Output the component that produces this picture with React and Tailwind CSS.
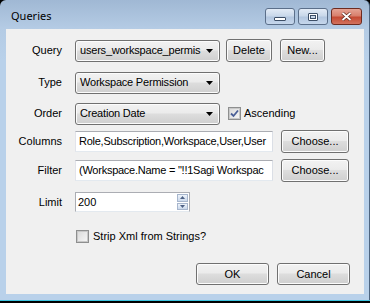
import React from 'react';

const ui = { fontFamily: '"Liberation Sans", Arial, sans-serif' };

function Win7Button({ children, className = '' }) {
  return (
    <div
      className={`flex items-center justify-center rounded-[3px] border border-[#707070] bg-[linear-gradient(#f2f2f2_0%,#ebebeb_45%,#dddddd_50%,#cfcfcf_100%)] text-[11px] text-black shadow-[inset_0_0_0_1px_#fcfcfc] ${className}`}
    >
      {children}
    </div>
  );
}

function Combo({ value }) {
  return (
    <div className="flex h-[22px] w-[145px] items-center rounded-[3px] border border-[#707070] bg-[linear-gradient(#f2f2f2_0%,#ebebeb_45%,#dddddd_50%,#cfcfcf_100%)] shadow-[inset_0_0_0_1px_#fcfcfc]">
      <span className="flex-1 whitespace-nowrap pl-[4px] text-[11px] tracking-[-0.2px] text-black">{value}</span>
      <svg width="7" height="4" viewBox="0 0 7 4" className="mr-[6px] ml-[2px] shrink-0">
        <path d="M0 0h7L3.5 4z" fill="#000" />
      </svg>
    </div>
  );
}

function TextBox({ value, className = '' }) {
  return (
    <div className={`flex h-[21px] items-center whitespace-nowrap border border-[#abadb3] border-b-[#e3e9ef] border-l-[#e2e3ea] border-r-[#dbdfe6] bg-white pl-[3px] text-[11px] tracking-[-0.25px] text-black ${className}`}>
      {value}
    </div>
  );
}

function CheckBox({ checked }) {
  return (
    <div className="flex h-[13px] w-[13px] shrink-0 items-center justify-center border border-[#8e8f8f] bg-white">
      <div className="flex h-[11px] w-[11px] items-center justify-center border border-[#c8c8c8] bg-[linear-gradient(135deg,#dcdcdc,#f4f4f4)]">
        {checked && (
          <svg width="9" height="9" viewBox="0 0 9 9">
            <path d="M1 4.5l2.5 2.5L8 1.5" fill="none" stroke="#4a5f97" strokeWidth="1.8" />
          </svg>
        )}
      </div>
    </div>
  );
}

function Label({ children }) {
  return <div className="w-[57px] shrink-0 pr-[1px] text-right text-[11px] text-black">{children}</div>;
}

function TitleButton({ kind }) {
  if (kind === 'close') {
    return (
      <div className="flex h-[17px] w-[31px] items-center justify-center rounded-[3px] border border-[#6d2b20] bg-[linear-gradient(#e5a394_0%,#d8806d_45%,#c54a33_55%,#d2725e_100%)]">
        <svg width="11" height="9" viewBox="0 0 11 9">
          <path d="M1.5 1l8 7M9.5 1l-8 7" stroke="#5a2418" strokeWidth="3.2" />
          <path d="M1.5 1l8 7M9.5 1l-8 7" stroke="#fff" strokeWidth="1.8" />
        </svg>
      </div>
    );
  }
  return (
    <div className="flex h-[17px] w-[30px] items-center justify-center rounded-[3px] border border-[#5b6f8a] bg-[linear-gradient(#e2ebf6_0%,#c9d8ea_45%,#b3c7e0_55%,#c6d7ec_100%)]">
      {kind === 'min' ? (
        <div className="mt-[5px] h-[4px] w-[12px] rounded-[1px] border border-[#3d4f67] bg-white" />
      ) : (
        <div className="h-[8px] w-[10px] rounded-[1px] border border-[#3d4f67] bg-white p-[1px]">
          <div className="h-full w-full border border-[#3d4f67] bg-[#c9d8ea]" />
        </div>
      )}
    </div>
  );
}

export default function App() {
  return (
    <div className="h-[303px] w-[370px] overflow-hidden bg-black" style={ui}>
      <div className="flex h-[300px] w-[370px] flex-col rounded-tl-[6px] rounded-tr-[6px] border-r border-r-[#4e6580] bg-[linear-gradient(#a0b8d4_0px,#b4cbe4_28px,#b9d1ea_60px,#b9d1ea_100%)]">
        <div className="flex h-[29px] shrink-0 items-start">
          <div
            className="ml-[11px] mt-[9px] text-[11px] leading-[14px] text-black"
            style={{ fontFamily: '"Noto Sans", "Open Sans", sans-serif' }}
          >
            Queries
          </div>
          <div className="ml-auto mr-[7px] mt-[8px] flex gap-[3px]">
            <TitleButton kind="min" />
            <TitleButton kind="max" />
            <TitleButton kind="close" />
          </div>
        </div>

        <div className="mx-[6px] flex h-[265px] w-[358px] flex-col bg-[#f0f0f0]">
          <div className="mt-[10px] flex h-[23px] items-center">
            <Label>Query</Label>
            <div className="ml-[12px]">
              <Combo value="users_workspace_permis" />
            </div>
            <Win7Button className="ml-[6px] h-[23px] w-[46px]">Delete</Win7Button>
            <Win7Button className="ml-[8px] h-[23px] w-[45px]">New...</Win7Button>
          </div>

          <div className="mt-[10px] flex h-[21px] items-center">
            <Label>Type</Label>
            <div className="ml-[12px]">
              <Combo value="Workspace Permission" />
            </div>
          </div>

          <div className="mt-[10px] flex h-[21px] items-center">
            <Label>Order</Label>
            <div className="ml-[12px]">
              <Combo value="Creation Date" />
            </div>
            <div className="ml-[8px] flex items-center gap-[3px]">
              <CheckBox checked />
              <span className="text-[11px] text-black">Ascending</span>
            </div>
          </div>

          <div className="mt-[6px] flex h-[23px] items-center">
            <Label>Columns</Label>
            <TextBox className="ml-[12px] w-[198px]" value="Role,Subscription,Workspace,User,User" />
            <Win7Button className="ml-[8px] h-[23px] w-[68px]">Choose...</Win7Button>
          </div>

          <div className="mt-[6px] flex h-[23px] items-center">
            <Label>Filter</Label>
            <TextBox className="ml-[12px] w-[198px]" value={'(Workspace.Name = "!!1Sagi Workspac'} />
            <Win7Button className="ml-[8px] h-[23px] w-[68px]">Choose...</Win7Button>
          </div>

          <div className="mt-[10px] flex h-[20px] items-center">
            <Label>Limit</Label>
            <div className="ml-[12px] flex h-[20px] w-[115px] items-stretch border border-[#abadb3] border-b-[#e3e9ef] bg-white">
              <span className="flex flex-1 items-center pl-[2px] text-[11px] text-black">200</span>
              <div className="flex w-[12px] flex-col gap-[1px] py-[1px] pr-[1px]">
                <div className="flex flex-1 items-center justify-center border border-[#a7b6cd] bg-[linear-gradient(#eef3fa,#cbd9ec)]">
                  <svg width="5" height="3" viewBox="0 0 5 3">
                    <path d="M0 3h5L2.5 0z" fill="#4d6185" />
                  </svg>
                </div>
                <div className="flex flex-1 items-center justify-center border border-[#a7b6cd] bg-[linear-gradient(#eef3fa,#cbd9ec)]">
                  <svg width="5" height="3" viewBox="0 0 5 3">
                    <path d="M0 0h5L2.5 3z" fill="#4d6185" />
                  </svg>
                </div>
              </div>
            </div>
          </div>

          <div className="mt-[18px] flex h-[13px] items-center pl-[70px]">
            <CheckBox />
            <span className="ml-[4px] text-[11px] text-black">Strip Xml from Strings?</span>
          </div>

          <div className="mt-[20px] flex justify-end gap-[8px] pr-[14px]">
            <Win7Button className="h-[22px] w-[73px]">OK</Win7Button>
            <Win7Button className="h-[22px] w-[73px]">Cancel</Win7Button>
          </div>
        </div>
      </div>
      <div className="h-[1px] w-full bg-[#3cc4df]" />
    </div>
  );
}
